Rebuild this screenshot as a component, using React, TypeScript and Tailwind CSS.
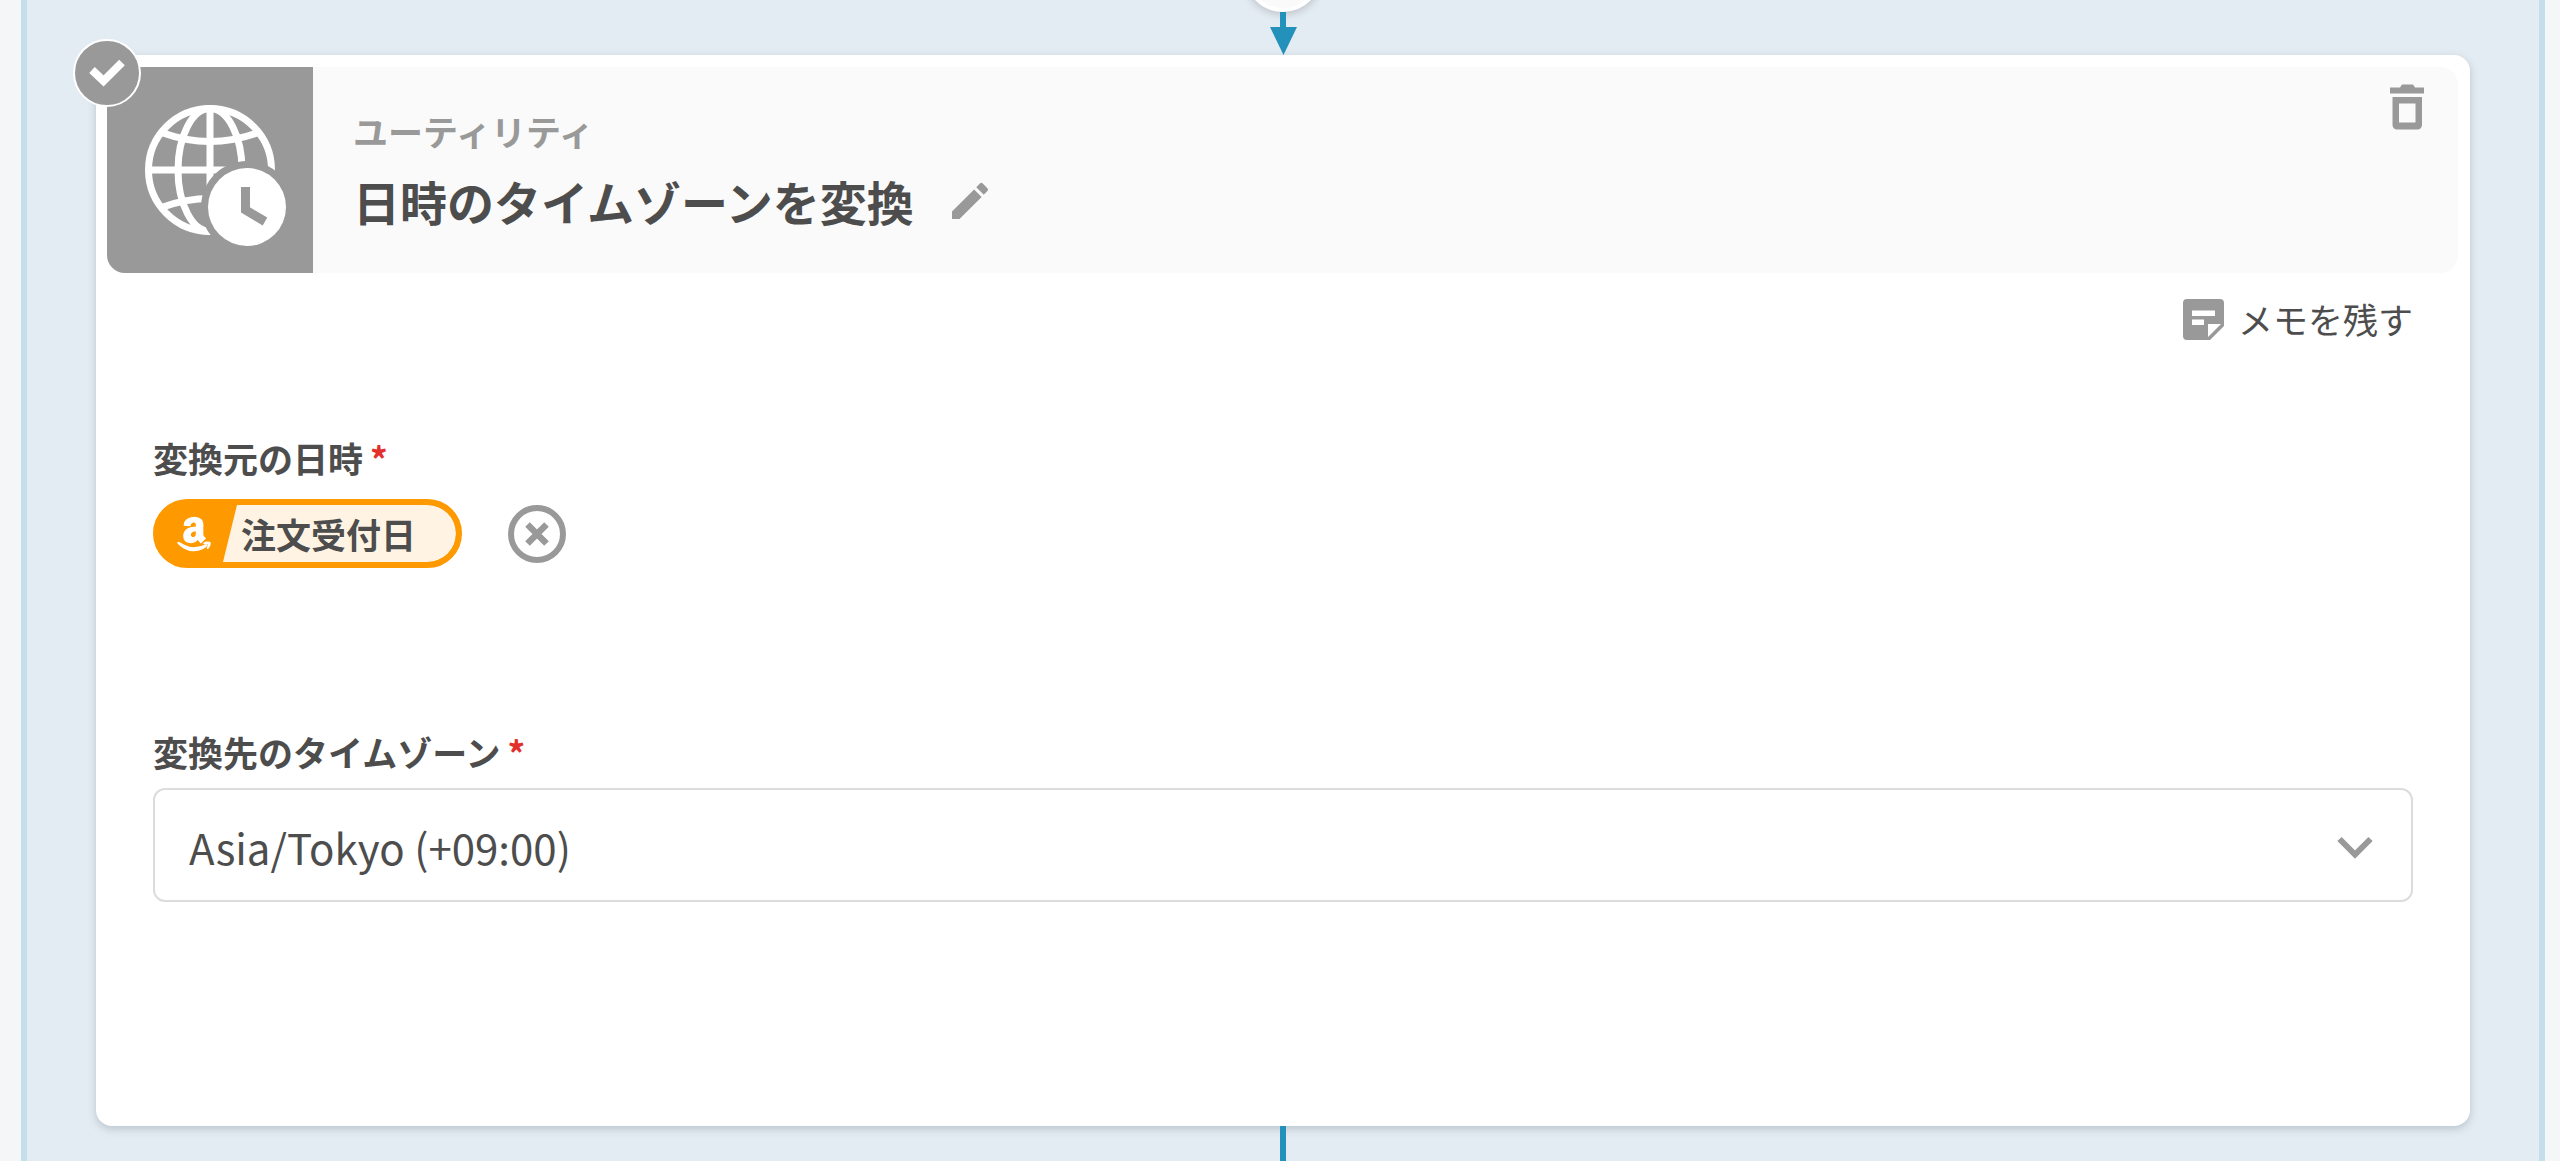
import type { ReactNode } from "react";
import { FaAmazon } from "react-icons/fa";
import { MdEdit } from "react-icons/md";

function GlobeClockIcon() {
  return (
    <svg viewBox="0 0 206 206" className="size-full" fill="none" aria-hidden="true">
      <g stroke="#fff" strokeWidth="7">
        <circle cx="103" cy="103" r="61.500" />
        <path d="M103 40V166M40 103H166" />
        <ellipse cx="103" cy="103" rx="32" ry="61.500" />
        <path d="M56 66Q103 83 150 66M56 140Q103 123 150 140" />
      </g>
      <circle cx="140" cy="140" r="46" fill="#999" />
      <circle cx="140" cy="140" r="39" fill="#fff" />
      <path d="M138.500 120V143L158 154.500" stroke="#999" strokeWidth="9" />
    </svg>
  );
}

function CheckBadge() {
  return (
    <span className="absolute -top-7 -left-[34px] flex size-[68px] items-center justify-center rounded-full border-2 border-white bg-[#999]">
      <svg viewBox="0 0 36 28" className="h-7 w-9" fill="none" aria-hidden="true">
        <path d="M3 11L14.500 22L33 3.500" stroke="#fff" strokeWidth="8" />
      </svg>
    </span>
  );
}

function TrashIcon() {
  return (
    <svg viewBox="0 0 34 46" className="h-[46px] w-[34px]" fill="#999" aria-hidden="true">
      <path d="M10 3.500L12 0.500H23L25 3.500H34V9.500H0V3.500Z" />
      <path
        fillRule="evenodd"
        d="M2.500 13H32V41A4.500 4.500 0 0 1 27.500 45.500H7A4.500 4.500 0 0 1 2.500 41ZM9 19.500V38.500H25.500V19.500Z"
      />
    </svg>
  );
}

function MemoIcon() {
  return (
    <svg viewBox="0 0 41 41" className="size-[41px]" aria-hidden="true">
      <path
        fill="#999"
        fillRule="evenodd"
        d="M4 0H37A4 4 0 0 1 41 4V27L27 41H4A4 4 0 0 1 0 37V4A4 4 0 0 1 4 0ZM9 11.500V17H32V11.500ZM9 20.500V26H21V20.500ZM25 25V38L38 25Z"
      />
    </svg>
  );
}

function ClearIcon() {
  return (
    <svg viewBox="0 0 58 58" className="size-[58px]" fill="none" stroke="#999" aria-hidden="true">
      <circle cx="29" cy="29" r="26" strokeWidth="6" />
      <path d="M19.500 19.500L38.500 38.500M38.500 19.500L19.500 38.500" strokeWidth="6.500" />
    </svg>
  );
}

function Required({ children }: { children: ReactNode }) {
  return (
    <>
      {children}
      <span className="ml-[7px] text-[#e2302c]">*</span>
    </>
  );
}

export default function App() {
  return (
    <div className="min-h-screen overflow-hidden bg-[#f4f6f8] pr-[15px] pl-[21px] font-['Noto_Sans_CJK_JP',sans-serif] text-[#4d4d4d]">
      <main className="flex min-h-screen flex-col border-x-[6px] border-[#c5dfea] bg-[#e4ecf3] px-[69px]">
        <div className="flex flex-col items-center">
          <div className="-mt-[66px] size-[78px] rounded-full border-4 border-white bg-[#fafafa] shadow-[0_2px_8px_rgba(0,0,0,0.2)]" />
          <div className="h-[15px] w-1.5 bg-[#2391b9]" />
          <svg viewBox="0 0 27 28" className="h-7 w-[27px]" aria-hidden="true">
            <path d="M0 0H27L13.500 28Z" fill="#2391b9" />
          </svg>
        </div>

        <section className="rounded-2xl bg-white pt-3 pb-56 shadow-[0_3px_9px_rgba(60,80,90,0.25)]">
          <header className="relative mr-3 ml-[11px] flex rounded-[18px] bg-[#fafafa]">
            <div className="relative size-[206px] shrink-0 rounded-bl-[18px] bg-[#999]">
              <GlobeClockIcon />
            </div>
            <CheckBadge />
            <div className="flex flex-1 flex-col justify-center gap-1 pt-1 pl-10">
              <p className="text-[35px] leading-[54px] font-bold text-[#999]">ユーティリティ</p>
              <div className="flex items-center gap-8">
                <h1 className="text-[47px] leading-[78px] font-bold">日時のタイムゾーンを変換</h1>
                <button type="button" aria-label="名前を編集">
                  <MdEdit className="size-12 text-[#999]" />
                </button>
              </div>
            </div>
            <button type="button" aria-label="削除" className="mt-[17px] mr-[34px] self-start">
              <TrashIcon />
            </button>
          </header>

          <div className="flex flex-col px-[57px]">
            <button type="button" className="mt-5 flex items-center gap-[14px] self-end">
              <MemoIcon />
              <span className="text-[35px] leading-[52px]">メモを残す</span>
            </button>

            <div className="mt-[89px]">
              <p className="text-[35px] leading-[48px] font-bold">
                <Required>変換元の日時</Required>
              </p>
              <div className="mt-[17px] flex items-center gap-[46px]">
                <div className="flex h-[69px] items-stretch overflow-hidden rounded-full border-[6px] border-[#ff9900] bg-[#ff9900]">
                  <div className="flex w-16 items-center justify-end">
                    <FaAmazon className="mr-2.5 size-[38px] stroke-white stroke-[18] text-white" />
                  </div>
                  <div className="flex items-center rounded-r-full bg-[#fff4e4] pr-10 pl-[18px] [clip-path:polygon(14px_0,100%_0,100%_100%,0_100%)]">
                    <span className="text-[35px] leading-[57px] font-bold">注文受付日</span>
                  </div>
                </div>
                <button type="button" aria-label="クリア">
                  <ClearIcon />
                </button>
              </div>
            </div>

            <div className="mt-40">
              <label htmlFor="timezone" className="block text-[35px] leading-[48px] font-bold">
                <Required>変換先のタイムゾーン</Required>
              </label>
              <div className="relative mt-3">
                <select
                  id="timezone"
                  defaultValue="Asia/Tokyo"
                  className="h-[114px] w-full appearance-none rounded-xl border-2 border-[#dcdcdc] bg-white pt-0.5 pr-24 pl-[34px] text-[42px]"
                >
                  <option value="Asia/Tokyo">Asia/Tokyo (+09:00)</option>
                </select>
                <svg
                  viewBox="0 0 36 24"
                  className="pointer-events-none absolute top-12 right-10 h-6 w-9"
                  fill="none"
                  aria-hidden="true"
                >
                  <path d="M2.500 3L18 18.500L33.500 3" stroke="#999" strokeWidth="6" />
                </svg>
              </div>
            </div>
          </div>
        </section>

        <div className="mx-auto w-1.5 flex-1 bg-[#2391b9]" />
      </main>
    </div>
  );
}
